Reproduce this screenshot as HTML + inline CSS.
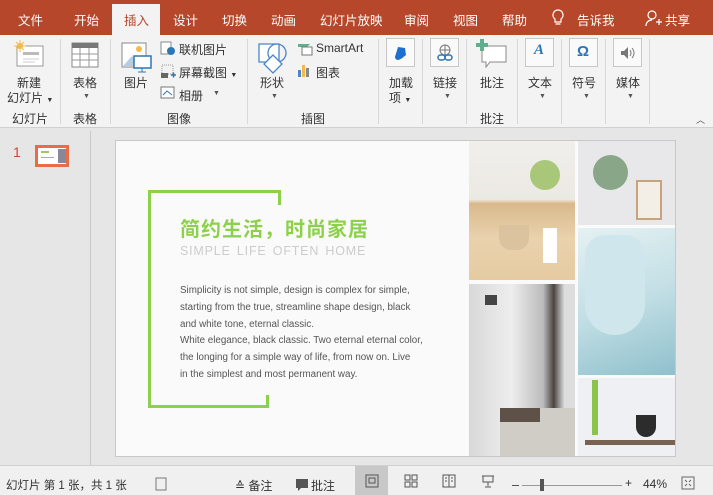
<!DOCTYPE html>
<html><head><meta charset="utf-8"><style>
*{margin:0;padding:0;box-sizing:border-box}
body{width:713px;height:495px;overflow:hidden;background:#e6e6e6;font-family:"Liberation Sans","Noto Sans CJK SC",sans-serif;font-size:12px;color:#333;position:relative}
.a{position:absolute}
.tab{position:absolute;top:10px;color:#fff;font-size:12.5px}
.lbl{position:absolute;font-size:12px;color:#333;white-space:nowrap}
.sep{position:absolute;top:39px;width:1px;height:85px;background:#d8d8d8}
.arr{position:absolute;font-size:7px;color:#555}
.ibox{position:absolute;top:38px;width:29px;height:29px;border:1px solid #c8c8c8;background:#fafafa}
.st{position:absolute;top:477px;font-size:12px;color:#333}
</style></head><body>
<div class="a" style="left:0;top:0;width:713px;height:35px;background:#b7472a"></div>
<div class="a" style="left:112px;top:4px;width:48px;height:31px;background:#f3f3f3"></div>
<div class="tab" style="left:18px">文件</div>
<div class="tab" style="left:74px">开始</div>
<div class="tab" style="left:124px;color:#b7472a">插入</div>
<div class="tab" style="left:173px">设计</div>
<div class="tab" style="left:222px">切换</div>
<div class="tab" style="left:271px">动画</div>
<div class="tab" style="left:320px">幻灯片放映</div>
<div class="tab" style="left:404px">审阅</div>
<div class="tab" style="left:453px">视图</div>
<div class="tab" style="left:502px">帮助</div>
<svg class="a" style="left:551px;top:9px" width="14" height="18"><path d="M7 1a5 5 0 0 0-3 9v3h6v-3a5 5 0 0 0-3-9zM4.5 15h5" stroke="#fff" fill="none" stroke-width="1.2"/></svg>
<div class="tab" style="left:577px">告诉我</div>
<svg class="a" style="left:645px;top:10px" width="18" height="18"><circle cx="7" cy="5" r="4" stroke="#fff" fill="none" stroke-width="1.2"/><path d="M1 16c0-4 3-6 6-6M11 12h6M14 9v6" stroke="#fff" fill="none" stroke-width="1.2"/></svg>
<div class="tab" style="left:665px">共享</div>
<div class="a" style="left:0;top:35px;width:713px;height:93px;background:#f3f3f3;border-bottom:1px solid #d0d0d0"></div>
<div class="sep" style="left:60px"></div><div class="sep" style="left:110px"></div><div class="sep" style="left:247px"></div><div class="sep" style="left:378px"></div><div class="sep" style="left:422px"></div><div class="sep" style="left:466px"></div><div class="sep" style="left:517px"></div><div class="sep" style="left:561px"></div><div class="sep" style="left:605px"></div><div class="sep" style="left:649px"></div>
<svg class="a" style="left:14px;top:40px" width="32" height="30"><rect x="3" y="6" width="26" height="20" fill="#fff" stroke="#999"/><rect x="9" y="12" width="16" height="3" fill="#bbb"/><path d="M9 19h16M9 22h12" stroke="#ccc"/><circle cx="6" cy="6" r="3" fill="#f5b94a"/><path d="M6 0v12M0 6h12M2 2l8 8M10 2l-8 8" stroke="#f5b94a" stroke-width="1"/></svg>
<div class="lbl" style="left:17px;top:74px">新建</div>
<div class="lbl" style="left:7px;top:89px">幻灯片 <span style="font-size:7px">▼</span></div>
<div class="lbl" style="left:12px;top:110px">幻灯片</div>
<svg class="a" style="left:71px;top:42px" width="28" height="26"><rect x="1" y="1" width="26" height="24" fill="#fff" stroke="#888"/><rect x="1" y="1" width="26" height="5" fill="#777"/><path d="M1 12h26M1 18h26M9 6v19M18 6v19" stroke="#999"/></svg>
<div class="lbl" style="left:73px;top:74px">表格</div><div class="arr" style="left:83px;top:93px">▼</div>
<div class="lbl" style="left:73px;top:110px">表格</div>
<svg class="a" style="left:121px;top:42px" width="32" height="32"><rect x="1" y="1" width="24" height="24" fill="#fff" stroke="#888"/><circle cx="18" cy="7" r="3" fill="#f5b94a"/><path d="M2 24l9-10 8 10z" fill="#b6cde6"/><rect x="13" y="14" width="17" height="12" fill="#fff" stroke="#2e75b6" stroke-width="1.5"/><path d="M21 26v4M17 30h8" stroke="#2e75b6"/></svg>
<div class="lbl" style="left:124px;top:74px">图片</div>
<svg class="a" style="left:160px;top:41px" width="16" height="15"><rect x="1" y="1" width="10" height="12" fill="#fff" stroke="#888"/><circle cx="11" cy="10" r="4" fill="#2e75b6"/></svg>
<div class="lbl" style="left:179px;top:41px">联机图片</div>
<svg class="a" style="left:160px;top:64px" width="16" height="15"><rect x="2" y="1" width="11" height="9" fill="none" stroke="#999" stroke-dasharray="1 1"/><rect x="1" y="9" width="7" height="5" fill="#666"/><path d="M11 11h5M13.5 8.5v5" stroke="#2e75b6" stroke-width="1.5"/></svg>
<div class="lbl" style="left:179px;top:64px">屏幕截图 <span style="font-size:7px">▼</span></div>
<svg class="a" style="left:160px;top:86px" width="16" height="15"><rect x="1" y="1" width="13" height="11" fill="#fff" stroke="#777"/><path d="M3 9l4-4 5 4" stroke="#2e75b6" fill="none"/></svg>
<div class="lbl" style="left:179px;top:87px">相册</div><div class="arr" style="left:213px;top:90px">▼</div>
<div class="lbl" style="left:167px;top:110px">图像</div>
<svg class="a" style="left:257px;top:41px" width="32" height="34"><path d="M2 3h20v18H2z" fill="#fff" stroke="#4a86c8" stroke-width="1.3"/><circle cx="20" cy="12" r="9" fill="none" stroke="#4a86c8" stroke-width="1.3"/><path d="M16 14l-9 9 9 9 9-9z" fill="#fff" stroke="#4a86c8" stroke-width="1.3"/></svg>
<div class="lbl" style="left:260px;top:74px">形状</div><div class="arr" style="left:271px;top:93px">▼</div>
<svg class="a" style="left:297px;top:41px" width="16" height="15"><path d="M1 3h12l-3 3H1z" fill="#5fae8c"/><rect x="5" y="6" width="10" height="8" fill="#fff" stroke="#777"/></svg>
<div class="lbl" style="left:316px;top:41px">SmartArt</div>
<svg class="a" style="left:297px;top:63px" width="16" height="15"><rect x="1" y="7" width="3" height="7" fill="#4a86c8"/><rect x="5" y="2" width="3" height="12" fill="#f5b94a"/><rect x="9" y="5" width="3" height="9" fill="#888"/></svg>
<div class="lbl" style="left:316px;top:64px">图表</div>
<div class="lbl" style="left:301px;top:110px">插图</div>
<div class="ibox" style="left:386px"></div><svg class="a" style="left:393px;top:45px" width="16" height="16"><path d="M5 2l7 1 1 7-5 4-6-2z" fill="#1f6fd0"/><circle cx="5" cy="12" r="3" fill="#1f6fd0"/></svg>
<div class="lbl" style="left:389px;top:74px">加载</div><div class="lbl" style="left:389px;top:89px">项 <span style="font-size:7px">▼</span></div>
<div class="ibox" style="left:430px"></div><svg class="a" style="left:437px;top:44px" width="16" height="18"><circle cx="8" cy="6" r="5" fill="none" stroke="#777"/><path d="M3 6h10M8 1v10" stroke="#777"/><rect x="1" y="11" width="7" height="5" rx="2.5" fill="none" stroke="#2e75b6" stroke-width="1.5"/><rect x="8" y="11" width="7" height="5" rx="2.5" fill="none" stroke="#2e75b6" stroke-width="1.5"/></svg>
<div class="lbl" style="left:433px;top:74px">链接</div><div class="arr" style="left:444px;top:93px">▼</div>
<svg class="a" style="left:476px;top:38px" width="32" height="30"><path d="M6 8h24v16H14l-4 5v-5H6z" fill="#fff" stroke="#888"/><path d="M6 1v12M0 7h12" stroke="#5fae8c" stroke-width="4"/></svg>
<div class="lbl" style="left:480px;top:74px">批注</div><div class="lbl" style="left:480px;top:110px">批注</div>
<div class="ibox" style="left:525px"></div><div class="a" style="left:534px;top:42px;color:#2e75b6;font-weight:bold;font-style:italic;font-size:15px;font-family:'Liberation Serif',serif">A</div>
<div class="lbl" style="left:528px;top:74px">文本</div><div class="arr" style="left:539px;top:93px">▼</div>
<div class="ibox" style="left:569px"></div><div class="a" style="left:577px;top:43px;color:#2e75b6;font-weight:bold;font-size:15px">Ω</div>
<div class="lbl" style="left:572px;top:74px">符号</div><div class="arr" style="left:583px;top:93px">▼</div>
<div class="ibox" style="left:613px"></div><svg class="a" style="left:620px;top:46px" width="16" height="14"><path d="M1 5h3l4-4v12l-4-4H1z" fill="#777"/><path d="M10 4q2 3 0 6M12 2q4 5 0 10" stroke="#777" fill="none"/></svg>
<div class="lbl" style="left:616px;top:74px">媒体</div><div class="arr" style="left:627px;top:93px">▼</div>
<div class="arr" style="left:696px;top:113px;font-size:9px">︿</div>
<div class="a" style="left:90px;top:131px;width:1px;height:334px;background:#c8c8c8"></div>
<div class="a" style="left:13px;top:144px;color:#d24726;font-size:14px">1</div>
<div class="a" style="left:35px;top:145px;width:34px;height:22px;border:3px solid #ea6b47;background:#fff"><div class="a" style="left:20px;top:1px;width:8px;height:14px;background:#889"></div><div class="a" style="left:3px;top:3px;width:8px;height:2px;background:#9c5"></div><div class="a" style="left:3px;top:9px;width:13px;height:1px;background:#aaa"></div></div>
<div class="a" style="left:115px;top:140px;width:561px;height:317px;background:#fafafa;border:1px solid #c8c8c8"></div>
<div class="a" style="left:148px;top:190px;width:133px;height:3px;background:#8dd14a"></div>
<div class="a" style="left:278px;top:190px;width:3px;height:15px;background:#8dd14a"></div>
<div class="a" style="left:148px;top:190px;width:3px;height:218px;background:#8dd14a"></div>
<div class="a" style="left:148px;top:405px;width:121px;height:3px;background:#8dd14a"></div>
<div class="a" style="left:266px;top:395px;width:3px;height:13px;background:#8dd14a"></div>
<div class="a" style="left:180px;top:213px;color:#8dd14a;font-size:20px;font-weight:bold;letter-spacing:1px">简约生活，时尚家居</div>
<div class="a" style="left:180px;top:244px;color:#ccc;font-size:12.5px;letter-spacing:0.8px;word-spacing:2px">SIMPLE LIFE OFTEN HOME</div>
<div class="a" style="left:180px;top:283px;color:#555;font-size:9.8px;line-height:16.8px;width:300px;white-space:nowrap">Simplicity is not simple, design is complex for simple,<br>starting from the true, streamline shape design, black<br>and white tone, eternal classic.<br>White elegance, black classic. Two eternal eternal color,<br>the longing for a simple way of life, from now on. Live<br>in the simplest and most permanent way.</div>
<div class="a" style="left:469px;top:141px;width:106px;height:139px;background:linear-gradient(#f0efec 0%,#ece9e3 42%,#d9b98c 45%,#e9d2ad 70%,#e6cba2 100%)"></div>
<div class="a" style="left:499px;top:225px;width:30px;height:25px;border-radius:0 0 12px 12px;background:#dcc3a0"></div>
<div class="a" style="left:543px;top:228px;width:14px;height:35px;background:#fff"></div>
<div class="a" style="left:530px;top:160px;width:30px;height:30px;border-radius:50%;background:#8cb84a;opacity:.7"></div>
<div class="a" style="left:469px;top:284px;width:106px;height:172px;background:linear-gradient(90deg,#d8d8d8,#eee 40%,#bbb 70%,#4a4440 80%,#ddd 90%)"></div>
<div class="a" style="left:500px;top:408px;width:75px;height:48px;background:#d0ccc6"></div>
<div class="a" style="left:500px;top:408px;width:40px;height:14px;background:#5e5248"></div>
<div class="a" style="left:485px;top:295px;width:12px;height:10px;background:#444"></div>
<div class="a" style="left:578px;top:141px;width:97px;height:84px;background:#e8e8ea"></div>
<div class="a" style="left:593px;top:155px;width:35px;height:35px;border-radius:50%;background:#6a9068;opacity:.75"></div>
<div class="a" style="left:636px;top:180px;width:26px;height:40px;background:#f3eee6;border:2px solid #c8a47c"></div>
<div class="a" style="left:578px;top:228px;width:97px;height:147px;background:linear-gradient(160deg,#e5f1f3,#c3dfe5 50%,#8fc0cc)"></div>
<div class="a" style="left:585px;top:235px;width:60px;height:100px;border-radius:20px 20px 30px 30px;background:#cfe6ec"></div>
<div class="a" style="left:578px;top:378px;width:97px;height:78px;background:#eef0f3"></div>
<div class="a" style="left:585px;top:440px;width:90px;height:5px;background:#7a6250"></div>
<div class="a" style="left:636px;top:415px;width:20px;height:22px;border-radius:0 0 10px 10px;background:#2c2c2c"></div>
<div class="a" style="left:592px;top:380px;width:6px;height:55px;background:#8cc44a"></div>
<div class="a" style="left:0;top:465px;width:713px;height:30px;background:#f0f0f0;border-top:1px solid #d0d0d0"></div>
<div class="st" style="left:6px;font-size:11.5px">幻灯片 第 1 张，共 1 张</div>
<svg class="a" style="left:154px;top:477px" width="14" height="14"><path d="M2 1h10v12H2z" fill="none" stroke="#777"/></svg>
<div class="st" style="left:235px">≙ 备注</div>
<svg class="a" style="left:295px;top:478px" width="14" height="14"><path d="M1 1h12v9H6l-3 3v-3H1z" fill="#555"/></svg>
<div class="st" style="left:311px">批注</div>
<div class="a" style="left:355px;top:466px;width:33px;height:29px;background:#c8c8c8"></div>
<svg class="a" style="left:365px;top:474px" width="14" height="14"><rect x="1" y="1" width="12" height="12" fill="none" stroke="#555"/><rect x="4" y="4" width="6" height="5" fill="none" stroke="#555"/></svg>
<svg class="a" style="left:404px;top:474px" width="14" height="14"><path d="M1 1h5v5H1zM8 1h5v5H8zM1 8h5v5H1zM8 8h5v5H8z" fill="none" stroke="#555"/></svg>
<svg class="a" style="left:442px;top:474px" width="14" height="14"><path d="M1 1h12v12H1zM7 1v12M3 4h2M9 4h2M3 7h2M9 7h2" fill="none" stroke="#555"/></svg>
<svg class="a" style="left:481px;top:474px" width="14" height="14"><path d="M1 2h12M2 2v6h10V2M7 8v4M4 13h6" fill="none" stroke="#555"/></svg>
<div class="a" style="left:512px;top:485px;width:7px;height:1px;background:#555"></div>
<div class="a" style="left:522px;top:485px;width:100px;height:1px;background:#999"></div>
<div class="a" style="left:540px;top:479px;width:4px;height:12px;background:#555"></div>
<div class="st" style="left:625px;top:476px">+</div>
<div class="st" style="left:643px">44%</div>
<svg class="a" style="left:681px;top:476px" width="14" height="14"><rect x="1" y="1" width="12" height="12" fill="none" stroke="#666"/><path d="M4 4l2 2M10 4l-2 2M4 10l2-2M10 10l-2-2" stroke="#666"/></svg>
</body></html>
